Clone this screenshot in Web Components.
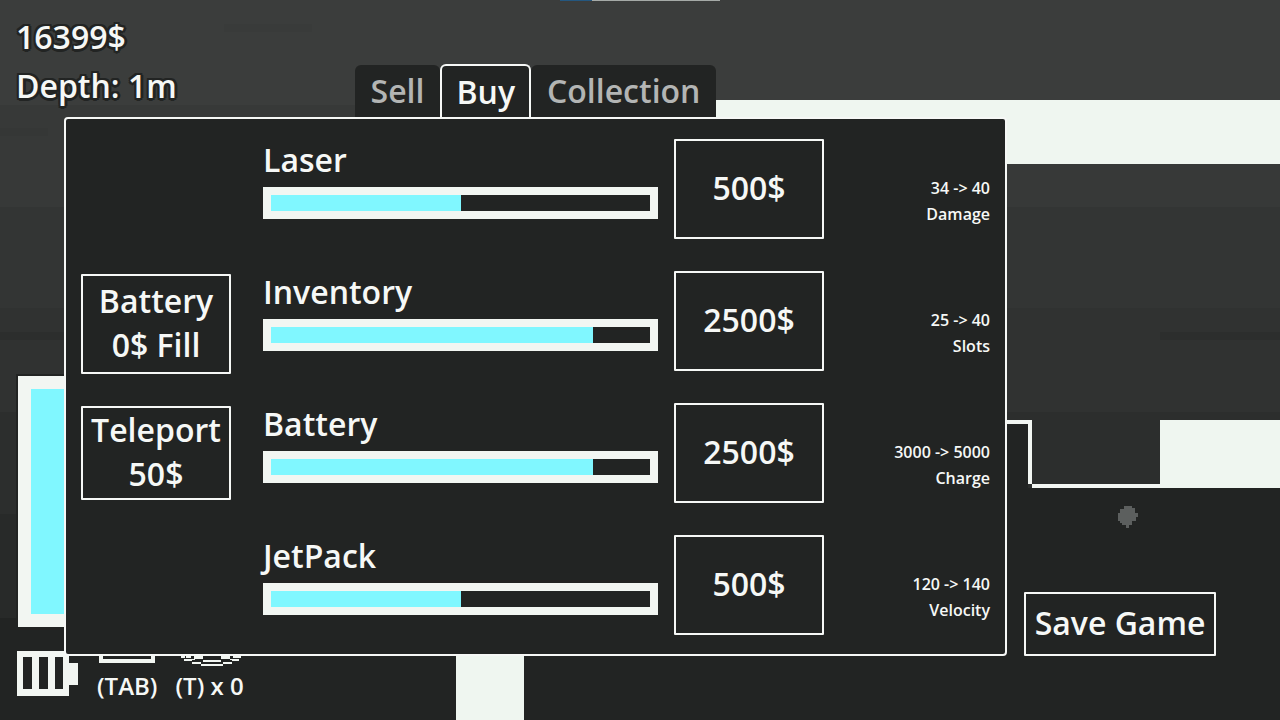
<!DOCTYPE html>
<html lang="en">
<head>
<meta charset="utf-8">
<title>Upgrade shop</title>
<style>
  html, body { margin: 0; min-height: 100%; background: #222423; }
  body { font-family: "Open Sans", "Noto Sans", sans-serif; font-weight: 600; color: #f6f8f6; }
</style>
</head>
<body>
<game-screen>
  <world-backdrop slot="world"></world-backdrop>
  <hud-stats slot="hud" money="16399$" depth="Depth: 1m"></hud-stats>
  <hud-gauges slot="hud"></hud-gauges>
  <shop-window slot="shop">
    <shop-tab slot="tabs">Sell</shop-tab>
    <shop-tab slot="tabs" selected>Buy</shop-tab>
    <shop-tab slot="tabs">Collection</shop-tab>
    <game-button slot="services" class="fill">Battery<br>0$ Fill</game-button>
    <game-button slot="services">Teleport<br>50$</game-button>
    <upgrade-row name="Laser" level="50" price="500$" change="34 -&gt; 40" unit="Damage"></upgrade-row>
    <upgrade-row name="Inventory" level="85" price="2500$" change="25 -&gt; 40" unit="Slots"></upgrade-row>
    <upgrade-row name="Battery" level="85" price="2500$" change="3000 -&gt; 5000" unit="Charge"></upgrade-row>
    <upgrade-row name="JetPack" level="50" price="500$" change="120 -&gt; 140" unit="Velocity"></upgrade-row>
  </shop-window>
  <game-button slot="shop" class="save">Save Game</game-button>
</game-screen>

<script>
  const define = (name, html, setup) => {
    const template = document.createElement('template');
    template.innerHTML = html;
    customElements.define(name, class extends HTMLElement {
      constructor() {
        super();
        this.attachShadow({ mode: 'open' }).append(template.content.cloneNode(true));
      }
      connectedCallback() { if (setup) setup(this, this.shadowRoot); }
    });
  };

  define('game-screen', `
    <style>
      :host { display: grid; min-height: 100vh; overflow: hidden; isolation: isolate; }
      .layer { grid-area: 1 / 1; min-width: 0; box-sizing: border-box; }
      .world { display: grid; z-index: 0; }
      .hud { z-index: 1; display: flex; flex-direction: column; justify-content: space-between; padding: 14px 16px 18px; }
      .shop { z-index: 2; display: flex; align-items: flex-end; gap: 17px; padding: 64px; }
      ::slotted(shop-window) { flex: 1; }
      ::slotted(.save) { width: 192px; height: 64px; }
    </style>
    <div class="layer world"><slot name="world"></slot></div>
    <div class="layer hud"><slot name="hud"></slot></div>
    <main class="layer shop"><slot name="shop"></slot></main>`);

  define('world-backdrop', `
    <style>
      :host { display: block; position: relative; }
      svg { position: absolute; width: 100%; height: 100%; }
    </style>
    <svg viewBox="0 0 1280 720" preserveAspectRatio="none" shape-rendering="crispEdges" aria-hidden="true">
      <rect width="1280" height="720" fill="#222423"/>
      <rect width="1280" height="105" fill="#3b3d3c"/>
      <rect y="105" width="1280" height="102" fill="#373938"/>
      <rect y="207" width="1280" height="101" fill="#333534"/>
      <rect y="308" width="1280" height="104" fill="#303231"/>
      <rect y="412" width="1280" height="102" fill="#2c2e2d"/>
      <rect y="514" width="1280" height="206" fill="#222423"/>
      <rect y="514" width="64" height="104" fill="#282a29"/>
      <rect x="224" y="24" width="88" height="8" fill="#393b3a"/>
      <rect y="128" width="48" height="8" fill="#353736"/>
      <rect x="1160" y="332" width="120" height="8" fill="#2c2e2d"/>
      <rect y="332" width="64" height="8" fill="#2c2e2d"/>
      <rect x="560" width="32" height="1" fill="#24577f"/>
      <rect x="592" width="128" height="1" fill="#a5aaa7"/>
      <rect x="716" y="100" width="564" height="64" fill="#eff6f0"/>
      <rect x="1000" y="424" width="28" height="296" fill="#222423"/>
      <rect x="1000" y="488" width="280" height="232" fill="#222423"/>
      <path d="M1000 420H1032V484H1160V420H1280V488H1032V484H1028V424H1000Z" fill="#f2f6f2"/>
      <rect x="1160" y="420" width="120" height="68" fill="#eff6f0"/>
      <path d="M1124 506h8v2h3v5h3v4h-2v4h-4v4h-3v3h-3v-3h-4v-2h-2v-2h-2v-8h2v-4h4z" fill="#5c5f5e"/>
      <rect x="456" y="650" width="68" height="70" fill="#eff6f0"/>
    </svg>`);

  define('hud-stats', `
    <style>
      :host { display: flex; flex-direction: column; gap: 4px; font-size: 32px; line-height: 45px;
        text-shadow: 2px 0 #222423, -2px 0 #222423, 0 2px #222423, 0 -2px #222423,
          2px 2px #222423, -2px 2px #222423, 2px -2px #222423, -2px -2px #222423, 3px 0 #222423, 0 3px #222423; }
    </style>
    <span class="money"></span><span class="depth"></span>`,
    (host, root) => {
      root.querySelector('.money').textContent = host.getAttribute('money');
      root.querySelector('.depth').textContent = host.getAttribute('depth');
    });

  define('hud-gauges', `
    <style>
      :host { display: flex; flex-direction: column; align-items: flex-start; font-size: 24px; line-height: 32px; }
      .charge { box-sizing: border-box; width: 80px; height: 255px; border: 2px solid #222423; background: #f2f6f2; padding: 13px; display: grid; }
      .charge i { background: #80f7ff; }
      .items { display: flex; align-items: flex-end; gap: 18px; margin-top: 16px; }
      figure { margin: 0; display: grid; justify-items: center; }
      .battery { padding: 0 0 6px 1px; }
      svg { display: block; }
    </style>
    <div class="charge"><i></i></div>
    <div class="items">
      <figure class="battery">
        <svg width="62" height="45" shape-rendering="crispEdges" aria-hidden="true">
          <path fill-rule="evenodd" fill="#f2f6f2" d="M0 0H52V12H61V34H52V45H0ZM6 6V38H15V6ZM22 6V38H31V6ZM38 6V38H46V6Z"/>
        </svg>
      </figure>
      <figure>
        <svg width="56" height="25" shape-rendering="crispEdges" aria-hidden="true">
          <path d="M2 0V16H54V0" fill="none" stroke="#f2f6f2" stroke-width="4"/>
        </svg>
        <figcaption>(TAB)</figcaption>
      </figure>
      <figure>
        <svg width="64" height="25" shape-rendering="crispEdges" aria-hidden="true">
          <g fill="#f2f6f2">
            <path d="M3 11h4v2h-4zM6 14h8v2h-8zM14 17h9v2h-9zM23 19h22v2h-22zM45 17h9v2h-9zM54 14h7v2h-7zM59 11h4v2h-4z"/>
            <path d="M8 11h5v2h-5zM16 11h9v3h-9zM14 14h3v1h-3zM25 15h18v2h-18zM43 11h9v3h-9zM52 14h3v1h-3zM55 11h4v2h-4z"/>
          </g>
        </svg>
        <figcaption>(T) x 0</figcaption>
      </figure>
    </div>`);

  define('game-button', `
    <style>
      :host { display: grid; font-size: 32px; line-height: 44px; }
      button { font: inherit; color: inherit; margin: 0; padding: 0 0 2px; background: #222423;
        border: 2px solid #f6f8f6; border-radius: 1px; white-space: nowrap; }
    </style>
    <button type="button"><slot></slot></button>`);

  define('shop-tab', `
    <style>
      :host { display: block; font-size: 32px; line-height: 44px; }
      button { font: inherit; display: block; margin: 0; padding: 4px 16px; color: #b3b5b4;
        background: #222423; border: 0; border-radius: 6px 6px 0 0; }
      :host([selected]) button { color: #f6f8f6; border: 2px solid #f6f8f6; border-bottom: 0; padding: 4px 14px 3px; }
    </style>
    <button type="button" role="tab"><slot></slot></button>`,
    (host, root) => root.querySelector('button').setAttribute('aria-selected', host.hasAttribute('selected')));

  define('shop-window', `
    <style>
      :host { display: flex; flex-direction: column; min-width: 0; }
      nav { display: flex; justify-content: center; align-items: flex-end; }
      .panel { display: grid; grid-template-columns: 150px 1fr; gap: 32px; padding: 20px 15px 19px;
        background: #222423; border: 2px solid #f6f8f6; border-radius: 4px; }
      .services, .rows { display: flex; flex-direction: column; gap: 32px; min-width: 0; }
      .services { justify-content: center; }
      ::slotted(.fill) { min-height: 100px; }
    </style>
    <nav role="tablist"><slot name="tabs"></slot></nav>
    <section class="panel">
      <div class="services"><slot name="services"></slot></div>
      <div class="rows"><slot></slot></div>
    </section>`);

  define('upgrade-row', `
    <style>
      :host { display: grid; grid-template-columns: 1fr 150px 150px; gap: 16px; height: 100px; }
      .info { display: flex; flex-direction: column; gap: 6px; min-width: 0; }
      .name { font-size: 32px; line-height: 42px; }
      .bar { box-sizing: border-box; height: 32px; border: 8px solid #f2f6f2; display: grid; }
      .bar i { background: #80f7ff; }
      .stat { align-self: end; padding-bottom: 12px; text-align: right; font-size: 16px; line-height: 26px; }
      .stat span { display: block; }
    </style>
    <div class="info">
      <span class="name" id="name"></span>
      <div class="bar" role="meter" aria-labelledby="name" aria-valuemin="0" aria-valuemax="100"><i></i></div>
    </div>
    <game-button></game-button>
    <div class="stat"><span class="change"></span><span class="unit"></span></div>`,
    (host, root) => {
      const attr = key => host.getAttribute(key);
      root.querySelector('.name').textContent = attr('name');
      root.querySelector('.bar').setAttribute('aria-valuenow', attr('level'));
      root.querySelector('.bar i').style.width = attr('level') + '%';
      root.querySelector('game-button').textContent = attr('price');
      root.querySelector('.change').textContent = attr('change');
      root.querySelector('.unit').textContent = attr('unit');
    });
</script>
</body>
</html>
